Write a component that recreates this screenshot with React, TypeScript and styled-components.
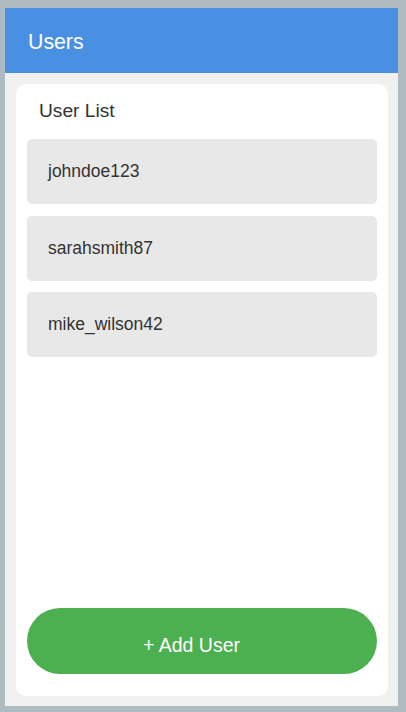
import React from 'react';
import styled, { createGlobalStyle } from 'styled-components';

const GlobalStyle = createGlobalStyle`
  html, body {
    margin: 0;
    padding: 0;
    background: #aebcc1;
    font-family: 'Liberation Sans', Arial, sans-serif;
  }
`;

const Page = styled.div`
  box-sizing: border-box;
  height: 712px;
  padding: 8px 8px 6px 5px;
  display: flex;
`;

const Frame = styled.div`
  flex: 1;
  display: flex;
  flex-direction: column;
  background: #f0f0f0;
`;

const Header = styled.header`
  height: 65px;
  box-sizing: border-box;
  flex-shrink: 0;
  background: #4a90e2;
  display: flex;
  align-items: center;
  padding: 4px 23px 0;
  color: #ffffff;
  font-size: 21.3px;
`;

const Content = styled.main`
  flex: 1;
  display: flex;
  padding: 11px 10px 10px 11px;
`;

const Card = styled.section`
  flex: 1;
  display: flex;
  flex-direction: column;
  background: #ffffff;
  border-radius: 10px;
  padding: 0 11px 22px;
`;

const Title = styled.h2`
  margin: 0;
  padding: 16px 12px 0;
  height: 41px;
  box-sizing: border-box;
  font-size: 19.2px;
  font-weight: normal;
  color: #333333;
`;

const List = styled.ul`
  list-style: none;
  margin: 14px 0 0;
  padding: 0;
  display: flex;
  flex-direction: column;
  gap: 11.5px;
  flex: 1;
`;

const Item = styled.li`
  height: 65px;
  background: #e8e8e8;
  border-radius: 5px;
  display: flex;
  align-items: center;
  padding: 0 21px;
  font-size: 17.5px;
  color: #333333;
`;

const AddButton = styled.button`
  height: 66px;
  border: none;
  border-radius: 33px;
  padding: 9px 21px 0 0;
  background: #4caf50;
  color: #ffffff;
  font-family: inherit;
  font-size: 19.5px;
  cursor: pointer;
`;

const users = ['johndoe123', 'sarahsmith87', 'mike_wilson42'];

export default function App() {
  return (
    <>
      <GlobalStyle />
      <Page>
        <Frame>
          <Header>Users</Header>
          <Content>
            <Card>
              <Title>User List</Title>
              <List>
                {users.map((u) => (
                  <Item key={u}>{u}</Item>
                ))}
              </List>
              <AddButton>+ Add User</AddButton>
            </Card>
          </Content>
        </Frame>
      </Page>
    </>
  );
}
